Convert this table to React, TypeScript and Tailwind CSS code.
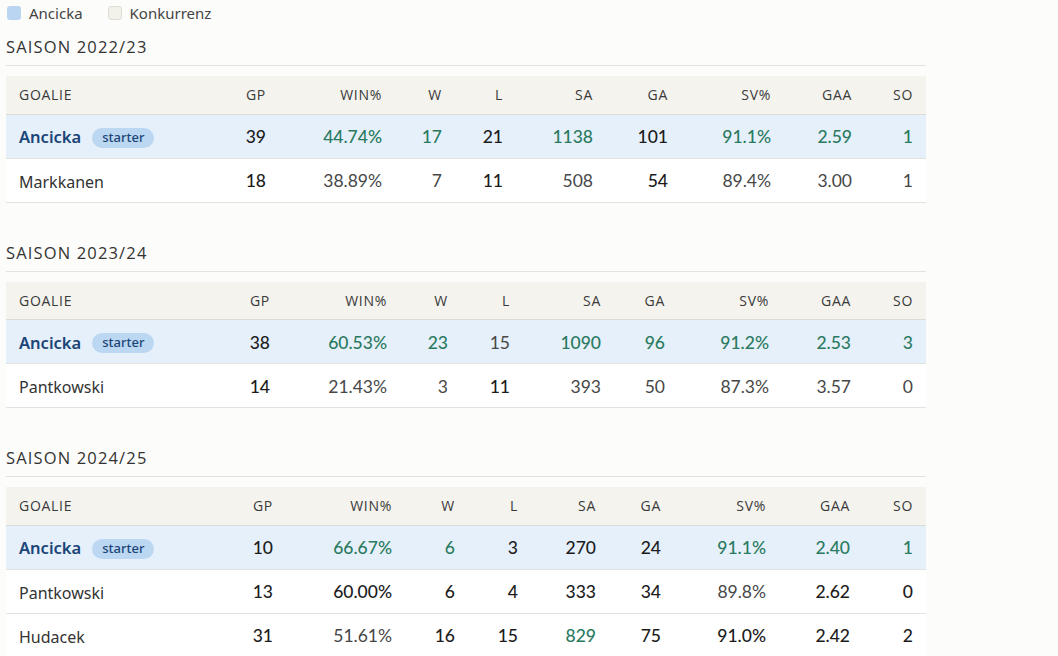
import React from "react"

type Tone = "g" | "d" | "n"

type Row = {
    name: string
    starter?: boolean
    cells: [string, Tone][]
}

type Season = {
    title: string
    cols: number[]
    rows: Row[]
}

const headers = ["GP", "WIN%", "W", "L", "SA", "GA", "SV%", "GAA", "SO"]

const seasons: Season[] = [
    {
        title: "SAISON 2022/23",
        cols: [213, 60, 116, 60, 61, 90, 75, 103, 81, 61],
        rows: [
            {
                name: "Ancicka",
                starter: true,
                cells: [["39", "d"], ["44.74%", "g"], ["17", "g"], ["21", "d"], ["1138", "g"], ["101", "d"], ["91.1%", "g"], ["2.59", "g"], ["1", "g"]]
            },
            {
                name: "Markkanen",
                cells: [["18", "d"], ["38.89%", "n"], ["7", "n"], ["11", "d"], ["508", "n"], ["54", "d"], ["89.4%", "n"], ["3.00", "n"], ["1", "n"]]
            }
        ]
    },
    {
        title: "SAISON 2023/24",
        cols: [217, 60, 117, 61, 62, 91, 64, 104, 82, 62],
        rows: [
            {
                name: "Ancicka",
                starter: true,
                cells: [["38", "d"], ["60.53%", "g"], ["23", "g"], ["15", "n"], ["1090", "g"], ["96", "g"], ["91.2%", "g"], ["2.53", "g"], ["3", "g"]]
            },
            {
                name: "Pantkowski",
                cells: [["14", "d"], ["21.43%", "n"], ["3", "n"], ["11", "d"], ["393", "n"], ["50", "n"], ["87.3%", "n"], ["3.57", "n"], ["0", "n"]]
            }
        ]
    },
    {
        title: "SAISON 2024/25",
        cols: [220, 60, 119, 63, 63, 78, 65, 105, 84, 63],
        rows: [
            {
                name: "Ancicka",
                starter: true,
                cells: [["10", "d"], ["66.67%", "g"], ["6", "g"], ["3", "d"], ["270", "d"], ["24", "d"], ["91.1%", "g"], ["2.40", "g"], ["1", "g"]]
            },
            {
                name: "Pantkowski",
                cells: [["13", "d"], ["60.00%", "d"], ["6", "d"], ["4", "d"], ["333", "d"], ["34", "d"], ["89.8%", "n"], ["2.62", "d"], ["0", "d"]]
            },
            {
                name: "Hudacek",
                cells: [["31", "d"], ["51.61%", "n"], ["16", "d"], ["15", "d"], ["829", "g"], ["75", "d"], ["91.0%", "d"], ["2.42", "d"], ["2", "d"]]
            }
        ]
    }
]

const toneClass: Record<Tone, string> = {
    g: "text-[#2a7a60] font-medium",
    d: "text-[#1c1c1c] font-medium",
    n: "text-[#474747] font-normal"
}

function SeasonTable({season}: { season: Season }) {
    return (
        <section className="mb-10">
            <h3 className="text-[16.5px] leading-5 tracking-[0.07em] text-[#333] font-medium pb-2 border-b border-[#e2e2de] font-['Open_Sans',sans-serif]">
                {season.title}
            </h3>
            <table className="mt-[10px] w-[920px] table-fixed border-collapse bg-white">
                <colgroup>
                    {season.cols.map((w, i) => (
                        <col key={i} style={{width: w}}/>
                    ))}
                </colgroup>
                <thead>
                <tr className="bg-[#f4f3ed] h-[38px] border-b border-[#dcdcd6]">
                    <th className="text-left pl-[13px] text-[14px] font-medium tracking-[0.05em] text-[#3a3a3a] font-['Open_Sans',sans-serif]">
                        GOALIE
                    </th>
                    {headers.map(h => (
                        <th key={h}
                            className="text-right pr-[13px] text-[14px] font-medium tracking-[0.05em] text-[#3a3a3a] font-['Open_Sans',sans-serif]">
                            {h}
                        </th>
                    ))}
                </tr>
                </thead>
                <tbody>
                {season.rows.map(row => (
                    <tr key={row.name}
                        className={`h-[44px] border-b border-[#e2e2de] ${row.starter ? "bg-[#e5f0fb]" : "bg-white"}`}>
                        <td className="pl-[13px] pt-[3px] font-['Noto_Sans',sans-serif]">
                            {row.starter ? (
                                <span className="flex items-center gap-[11px]">
                                    <span className="text-[16.5px] font-semibold text-[#1b4577]">{row.name}</span>
                                    <span className="inline-flex items-center h-5 px-[10px] rounded-full bg-[#bcd7f1] text-[13px] font-medium text-[#1b4577]">
                                        starter
                                    </span>
                                </span>
                            ) : (
                                <span className="text-[16px] text-[#333]">{row.name}</span>
                            )}
                        </td>
                        {row.cells.map(([v, t], i) => (
                            <td key={i} className={`text-right pr-[13px] pt-[3px] text-[17.5px] ${toneClass[t]}`}>
                                {v}
                            </td>
                        ))}
                    </tr>
                ))}
                </tbody>
            </table>
        </section>
    )
}

export default function App() {
    return (
        <div className="min-h-screen bg-[#fcfcfa] font-['Lato',sans-serif] px-[6px] pt-[3px]">
            <div className="w-[920px]">
                {/* Legend */}
                <div className="flex items-center h-5 text-[15px] text-[#444] font-['Noto_Sans',sans-serif]">
                    <span className="w-[14px] h-[14px] rounded-[3px] bg-[#b9d5f1] ml-[1px]"></span>
                    <span className="ml-2">Ancicka</span>
                    <span className="w-[14px] h-[14px] rounded-[3px] bg-[#f2f1ea] border border-[#dedcd4] ml-[25px]"></span>
                    <span className="ml-2">Konkurrenz</span>
                </div>

                <div className="mt-[14px]">
                    {seasons.map(s => (
                        <SeasonTable key={s.title} season={s}/>
                    ))}
                </div>
            </div>
        </div>
    )
}
